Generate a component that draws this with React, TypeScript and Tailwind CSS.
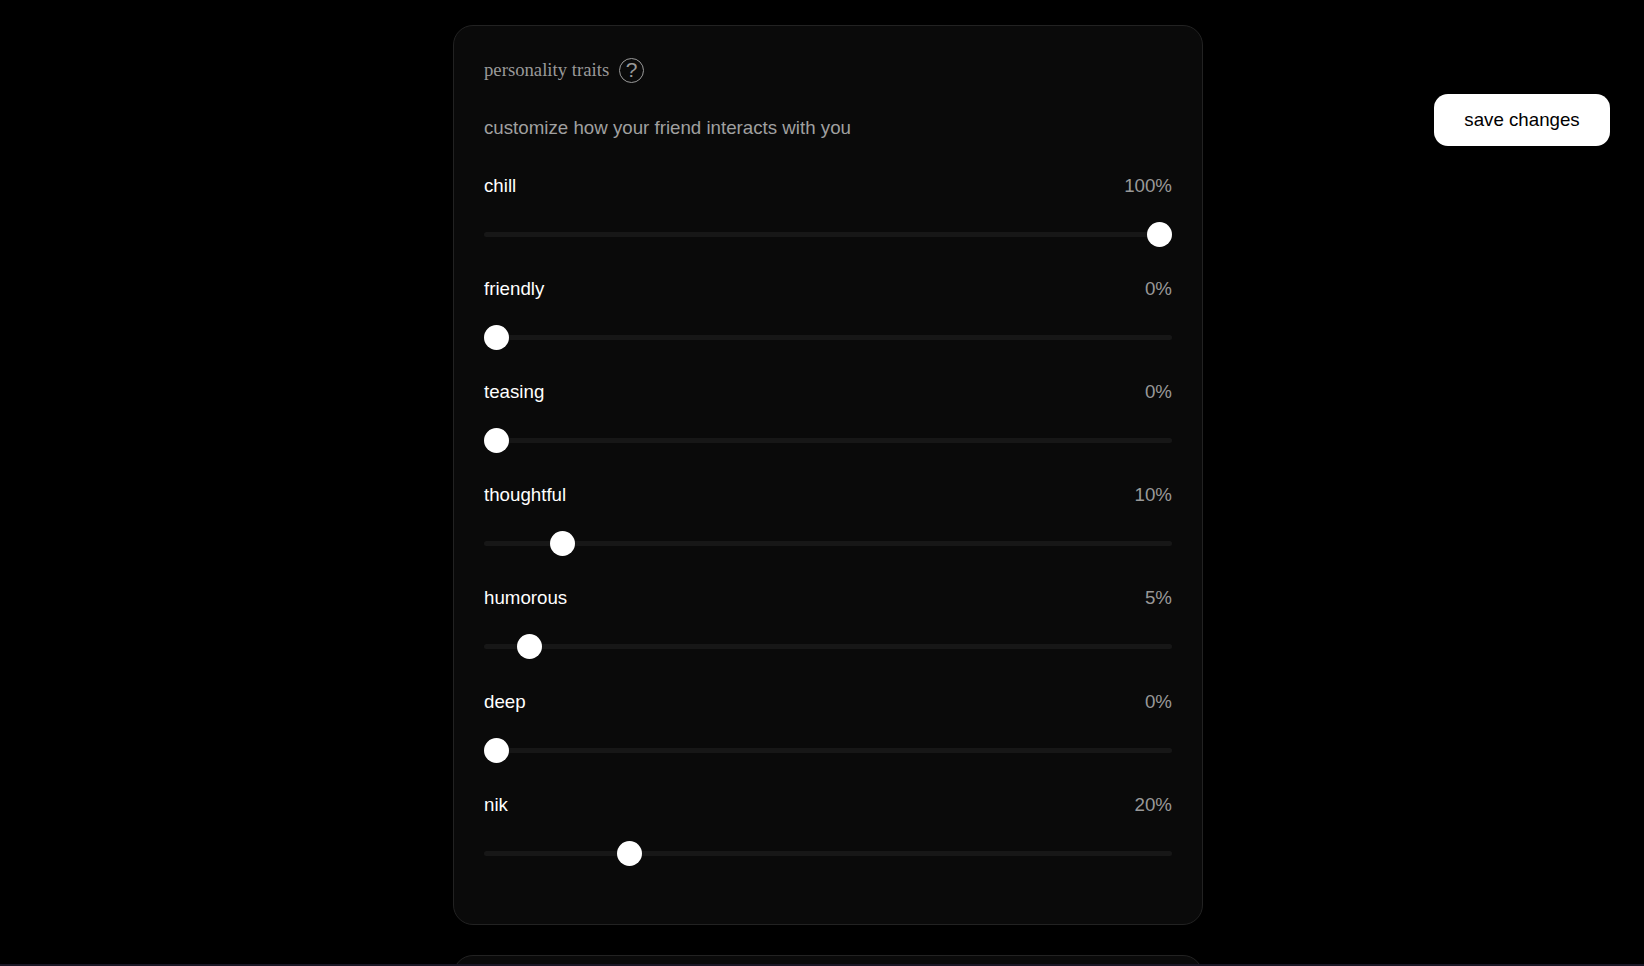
const traits = [
  { name: "chill", value: 100 },
  { name: "friendly", value: 0 },
  { name: "teasing", value: 0 },
  { name: "thoughtful", value: 10 },
  { name: "humorous", value: 5 },
  { name: "deep", value: 0 },
  { name: "nik", value: 20 },
];

const TraitSlider = ({ name, value }: { name: string; value: number }) => (
  <div className="mb-[42.1px]">
    <div className="flex justify-between text-[18.72px] leading-[20px] mb-[36px]">
      <span className="text-white">{name}</span>
      <span className="text-[#999]">{value}%</span>
    </div>
    <input
      type="range"
      min={0}
      max={100}
      defaultValue={value}
      className="block w-full h-[5px] rounded-[3px] bg-[#171717] appearance-none [&::-webkit-slider-thumb]:appearance-none [&::-webkit-slider-thumb]:w-[25px] [&::-webkit-slider-thumb]:h-[25px] [&::-webkit-slider-thumb]:rounded-full [&::-webkit-slider-thumb]:bg-white"
    />
  </div>
);

export default function App() {
  return (
    <div className="relative h-screen overflow-hidden bg-black font-['Liberation_Sans',Arial,sans-serif]">
      <main className="w-[750px] ml-[453px] pt-[25px]">
        <section className="h-[900px] mb-[30px] p-[30px] rounded-[20px] border border-[#222] bg-[#0a0a0a]">
          <div className="flex items-center gap-[10px] mb-[33px]">
            <h2 className="font-['Liberation_Serif',serif] text-[18.72px] font-normal text-[#999]">
              personality traits
            </h2>
            <span className="flex items-center justify-center w-[25px] h-[25px] rounded-full border border-[#999] text-[#999] text-[21px]">
              ?
            </span>
          </div>
          <p className="mb-[37px] text-[18.72px] leading-[22px] text-[#a0a0a0]">
            customize how your friend interacts with you
          </p>
          {traits.map((trait) => (
            <TraitSlider key={trait.name} name={trait.name} value={trait.value} />
          ))}
        </section>
        <section className="h-[300px] rounded-[20px] border border-[#222] bg-[#0a0a0a]" />
      </main>
      <button className="absolute top-[94px] right-[34px] w-[176px] h-[52px] rounded-[14px] bg-white text-black text-[18.72px]">
        save changes
      </button>
      <div className="absolute bottom-0 inset-x-0 h-[2px] bg-[#1a1625]" />
    </div>
  );
}
